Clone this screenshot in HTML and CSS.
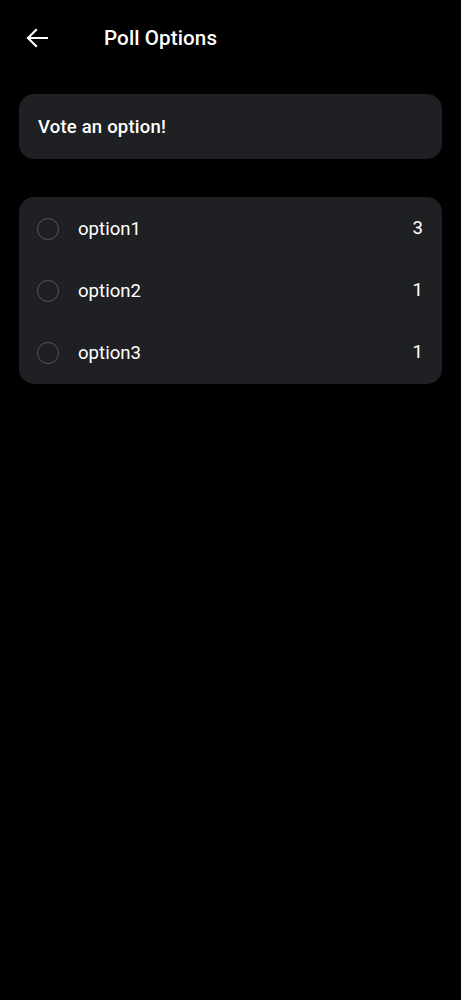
FILE: index.html
```html
<!DOCTYPE html>
<html>
<head>
<meta charset="utf-8">
<link rel="stylesheet" href="styles.css">
</head>
<body>
<div class="app">
  <header class="topbar">
    <button class="back" aria-label="Back">
      <svg width="22" height="20" viewBox="0 0 22 20"><path d="M2 10H21M10 2L2 10L10 18" fill="none" stroke="#fff" stroke-width="2.2" stroke-linecap="square" stroke-linejoin="miter"/></svg>
    </button>
    <h1 class="title">Poll Options</h1>
  </header>
  <section class="card question">Vote an option!</section>
  <section class="card options">
    <div class="row"><span class="radio"></span><span class="label">option1</span><span class="count">3</span></div>
    <div class="row"><span class="radio"></span><span class="label">option2</span><span class="count">1</span></div>
    <div class="row"><span class="radio"></span><span class="label">option3</span><span class="count">1</span></div>
  </section>
</div>
</body>
</html>
```
FILE: styles.css
```css
html, body {
  margin: 0;
  padding: 0;
  background: #000;
  color: #fff;
  font-family: Roboto, "Noto Sans", sans-serif;
}
.app {
  width: 461px;
  min-height: 1000px;
  box-sizing: border-box;
  padding: 0 19px;
}
.topbar {
  height: 75px;
  display: flex;
  align-items: center;
}
.back {
  background: none;
  border: 0;
  padding: 0;
  margin: 0 0 0 7px;
  width: 22px;
  height: 20px;
  display: flex;
}
.title {
  margin: 0 0 0 56px;
  font-size: 20.6px;
  font-weight: 500;
  letter-spacing: 0.1px;
}
.card {
  background: #1f2023;
  border-radius: 15px;
}
.question {
  margin-top: 19px;
  height: 65px;
  display: flex;
  align-items: center;
  padding: 0 19px;
  font-size: 18.5px;
  font-weight: 500;
  letter-spacing: 0.2px;
}
.options {
  margin-top: 38px;
  padding: 1px 0 0;
  height: 187px;
  box-sizing: border-box;
}
.row {
  height: 62px;
  display: flex;
  align-items: center;
  padding: 0 19px 0 18px;
}
.radio {
  width: 20px;
  height: 20px;
  border: 1.5px solid #53565b;
  border-radius: 50%;
  flex: none;
}
.label {
  margin-left: 19px;
  font-size: 18.6px;
  flex: 1;
}
.count {
  font-size: 18.6px;
  margin-top: -3px;
}
```
